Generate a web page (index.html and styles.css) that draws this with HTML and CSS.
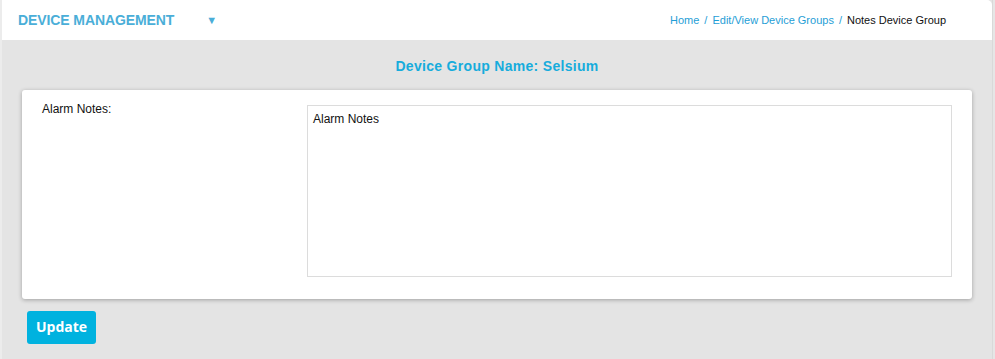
FILE: index.html
```html
<!DOCTYPE html>
<html lang="en">
<head>
  <meta charset="UTF-8">
  <title>Notes Device Group</title>
  <link rel="stylesheet" href="styles.css">
</head>
<body>
  <div class="frame">
    <div class="page">
      <header class="topbar">
        <div class="module">
          <span class="module-name">DEVICE MANAGEMENT</span>
          <span class="caret">&#9660;</span>
        </div>
        <nav class="crumbs">
          <a href="#">Home</a>
          <span class="sep">/</span>
          <a href="#">Edit/View Device Groups</a>
          <span class="sep">/</span>
          <span class="current">Notes Device Group</span>
        </nav>
      </header>

      <main class="content">
        <h2 class="group-title">Device Group Name: Selsium</h2>

        <div class="card">
          <label class="field-label" for="notes">Alarm Notes:</label>
          <textarea id="notes" class="notes">Alarm Notes</textarea>
        </div>

        <button class="update-btn">Update</button>
      </main>
    </div>
    <div class="rail"></div>
  </div>
</body>
</html>
```

FILE: styles.css
```css
* {
  margin: 0;
  padding: 0;
  box-sizing: border-box;
}

html, body {
  height: 100%;
}

body {
  font-family: "Liberation Sans", Arial, sans-serif;
  background: #e4e4e4;
  color: #222;
}

.frame {
  display: flex;
  min-height: 100%;
  border-left: 2px solid #ececec;
}

.page {
  flex: 1;
  display: flex;
  flex-direction: column;
}

.rail {
  width: 3px;
  background: #e6e6e6;
  border-left: 1px solid #d9d9d9;
}

.topbar {
  height: 40px;
  background: #fff;
  border-top-right-radius: 5px;
  display: flex;
  align-items: center;
  justify-content: space-between;
  padding: 0 46px 0 16px;
}

.module {
  display: flex;
  align-items: center;
}

.module-name {
  font-size: 14px;
  font-weight: bold;
  color: #4aaed8;
  letter-spacing: -0.1px;
}

.caret {
  font-size: 11px;
  color: #4aaed8;
  margin-left: 32px;
}

.crumbs {
  font-size: 11px;
  display: flex;
  align-items: center;
}

.crumbs a {
  color: #1f9ed6;
  text-decoration: none;
}

.crumbs .sep {
  color: #1f9ed6;
  margin: 0 5px;
}

.crumbs .current {
  color: #111;
}

.content {
  flex: 1;
  padding: 0 20px 14px 20px;
}

.group-title {
  text-align: center;
  font-size: 14px;
  line-height: 16px;
  font-weight: bold;
  color: #17acdc;
  letter-spacing: 0.3px;
  padding: 18px 0 16px;
}

.card {
  background: #fff;
  border-radius: 3px;
  box-shadow: 0 1px 4px rgba(0, 0, 0, 0.3);
  display: flex;
  padding: 12px 20px 22px 20px;
}

.field-label {
  width: 265px;
  font-size: 12px;
  color: #111;
}

.notes {
  flex: 1;
  height: 172px;
  border: 1px solid #dcdcdc;
  padding: 6px 5px;
  font-family: "Liberation Sans", Arial, sans-serif;
  font-size: 12px;
  color: #111;
  resize: none;
  margin-top: 3px;
}

.update-btn {
  margin: 12px 0 0 5px;
  background: #00b2df;
  color: #fff;
  border: none;
  border-radius: 3px;
  font-family: "Open Sans", sans-serif;
  font-weight: bold;
  font-size: 14px;
  line-height: 18px;
  padding: 7px 9px 8px;
  height: 33px;
  cursor: pointer;
}
```
